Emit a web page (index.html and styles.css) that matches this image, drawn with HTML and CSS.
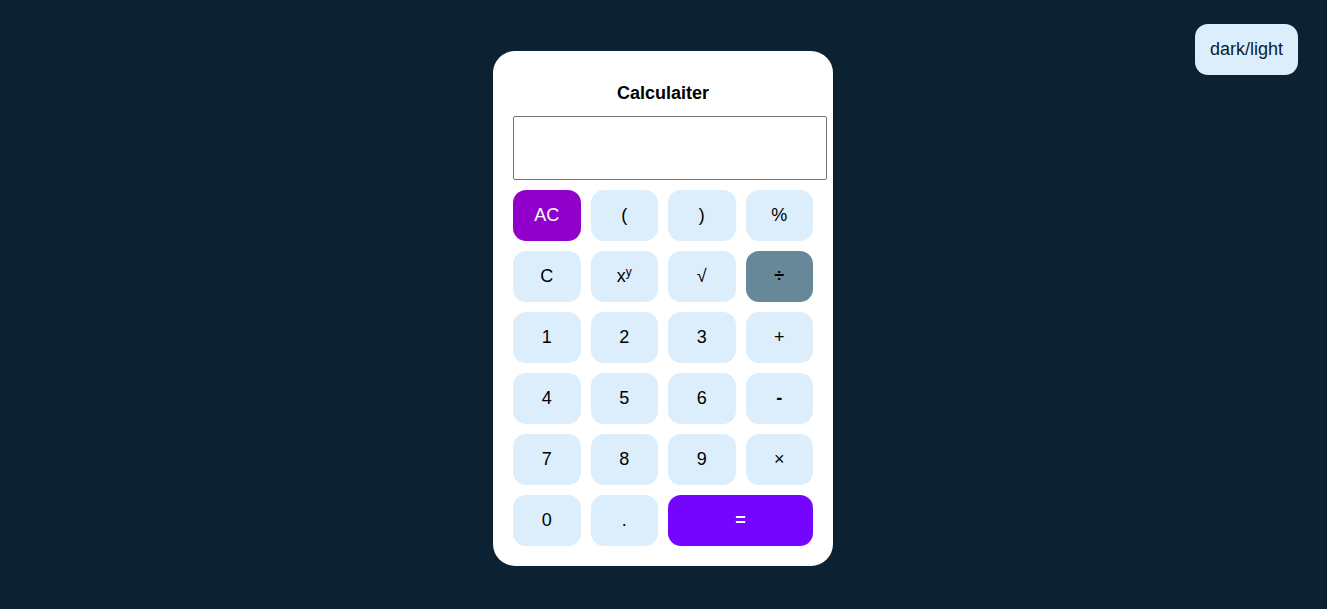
FILE: index.html
```html
<!DOCTYPE html>
<html>
<head>
<meta charset="utf-8">
<link rel="stylesheet" href="styles.css">
</head>
<body>
<button class="theme">dark/light</button>
<main class="page">
  <div class="card">
    <h1 class="title">Calculaiter</h1>
    <input class="display" type="text">
    <div class="keys">
      <button class="key key-ac">AC</button>
      <button class="key">(</button>
      <button class="key">)</button>
      <button class="key">%</button>
      <button class="key">C</button>
      <button class="key">x<sup>y</sup></button>
      <button class="key">√</button>
      <button class="key key-div">÷</button>
      <button class="key">1</button>
      <button class="key">2</button>
      <button class="key">3</button>
      <button class="key">+</button>
      <button class="key">4</button>
      <button class="key">5</button>
      <button class="key">6</button>
      <button class="key key-bold">-</button>
      <button class="key">7</button>
      <button class="key">8</button>
      <button class="key">9</button>
      <button class="key">×</button>
      <button class="key">0</button>
      <button class="key">.</button>
      <button class="key key-eq">=</button>
    </div>
  </div>
</main>
</body>
</html>
```
FILE: styles.css
```css
* { box-sizing: border-box; }
html, body { margin: 0; height: 100%; }
body {
  background: #0c2131;
  font-family: "Liberation Sans", Arial, sans-serif;
}
.theme {
  position: absolute;
  top: 24px;
  right: 29px;
  width: 103px;
  height: 51px;
  border: none;
  border-radius: 13px;
  background: #dceefc;
  color: #0c1c2c;
  font-family: "Liberation Sans", Arial, sans-serif;
  font-size: 18px;
  padding: 0;
}
.page {
  display: flex;
  justify-content: center;
  padding-top: 51px;
  padding-right: 1px;
}
.card {
  width: 340px;
  background: #fff;
  border-radius: 22px;
  padding: 20px;
}
.title {
  margin: 0;
  height: 45px;
  line-height: 44px;
  text-align: center;
  font-size: 18px;
  font-weight: bold;
  color: #000;
}
.display {
  display: block;
  box-sizing: content-box;
  width: 300px;
  height: 62px;
  padding: 0 6px;
  border: 1px solid #767676;
  border-radius: 2px;
  margin: 0 0 10px 0;
  font-size: 24px;
}
.keys {
  display: grid;
  grid-template-columns: repeat(4, 1fr);
  grid-auto-rows: 51px;
  column-gap: 10px;
  row-gap: 10px;
}
.key {
  border: none;
  border-radius: 13px;
  background: #dceefc;
  color: #000;
  font-family: "Liberation Sans", Arial, sans-serif;
  font-size: 18px;
  padding: 0;
}
.key sup { font-size: 12px; vertical-align: 6px; line-height: 0; }
.key-bold { font-weight: bold; }
.key-ac { background: #9200cb; color: #fff; }
.key-div { background: #668899; font-weight: bold; }
.key-eq { grid-column: span 2; background: #7605ff; color: #fff; font-weight: bold; }
```
